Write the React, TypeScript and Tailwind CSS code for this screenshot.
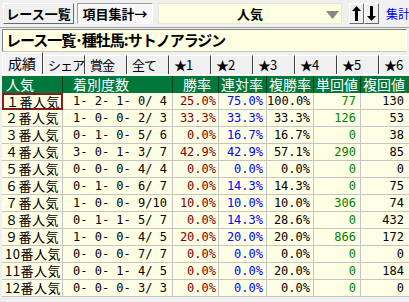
import React from "react";

const jp = "font-['MS_Gothic','Noto_Sans_CJK_JP',sans-serif]";
const mono = "font-['DejaVu_Sans_Mono',monospace]";

type Row = {
  label: string;
  record: string;
  win: string;
  place: string;
  show: string;
  tan: string;
  fuku: string;
};

const rows: Row[] = [
  { label: "１番人気", record: "1- 2- 1- 0/ 4", win: "25.0%", place: "75.0%", show: "100.0%", tan: "77", fuku: "130" },
  { label: "２番人気", record: "1- 0- 0- 2/ 3", win: "33.3%", place: "33.3%", show: "33.3%", tan: "126", fuku: "53" },
  { label: "３番人気", record: "0- 1- 0- 5/ 6", win: "0.0%", place: "16.7%", show: "16.7%", tan: "0", fuku: "38" },
  { label: "４番人気", record: "3- 0- 1- 3/ 7", win: "42.9%", place: "42.9%", show: "57.1%", tan: "290", fuku: "85" },
  { label: "５番人気", record: "0- 0- 0- 4/ 4", win: "0.0%", place: "0.0%", show: "0.0%", tan: "0", fuku: "0" },
  { label: "６番人気", record: "0- 1- 0- 6/ 7", win: "0.0%", place: "14.3%", show: "14.3%", tan: "0", fuku: "75" },
  { label: "７番人気", record: "1- 0- 0- 9/10", win: "10.0%", place: "10.0%", show: "10.0%", tan: "306", fuku: "74" },
  { label: "８番人気", record: "0- 1- 1- 5/ 7", win: "0.0%", place: "14.3%", show: "28.6%", tan: "0", fuku: "432" },
  { label: "９番人気", record: "1- 0- 0- 4/ 5", win: "20.0%", place: "20.0%", show: "20.0%", tan: "866", fuku: "172" },
  { label: "10番人気", record: "0- 0- 0- 7/ 7", win: "0.0%", place: "0.0%", show: "0.0%", tan: "0", fuku: "0" },
  { label: "11番人気", record: "0- 0- 1- 4/ 5", win: "0.0%", place: "0.0%", show: "20.0%", tan: "0", fuku: "184" },
  { label: "12番人気", record: "0- 0- 0- 3/ 3", win: "0.0%", place: "0.0%", show: "0.0%", tan: "0", fuku: "0" },
];

const tabs = ["シェア", "賞金", "全て", "★1", "★2", "★3", "★4", "★5", "★6"];

const cols = "grid grid-cols-[61px_110px_46px_48px_47px_47px_46px]";

function Arrow({ up }: { up?: boolean }) {
  return (
    <svg width="9" height="15" viewBox="0 0 9 15">
      {up ? (
        <>
          <polygon points="4.5,0 9,5 0,5" fill="#000" />
          <rect x="3" y="4" width="3" height="11" fill="#000" />
        </>
      ) : (
        <>
          <rect x="3" y="0" width="3" height="11" fill="#000" />
          <polygon points="4.5,15 9,10 0,10" fill="#000" />
        </>
      )}
    </svg>
  );
}

export default function App() {
  return (
    <div className={`w-[409px] h-[302px] overflow-hidden bg-[#f0f0f0] whitespace-nowrap ${jp}`}>
      {/* toolbar */}
      <div className="flex items-stretch h-[24px] pt-[3px] pl-[3px]">
        <div className="w-[71px] shrink-0 flex items-center justify-center bg-[#f0f0f0] border border-t-white border-l-white border-r-[#696969] border-b-[#696969] text-[13px] font-bold text-black">
          レース一覧
        </div>
        <div className="ml-[3px] w-[76px] shrink-0 flex items-center justify-center bg-[#f8f8f8] border border-t-[#a0a0a0] border-l-[#a0a0a0] border-r-white border-b-white text-[13px] font-bold text-black">
          項目集計→
        </div>
        <div className="ml-[5px] w-[184px] shrink-0 relative flex items-center justify-center bg-[#ffffe1] border border-[#e8e8d8] text-[13px] font-bold text-black">
          人気
          <svg className="absolute right-[2px] top-[7px]" width="13" height="8" viewBox="0 0 13 8">
            <polygon points="0,0 13,0 6.5,8" fill="#888" />
          </svg>
        </div>
        <div className="ml-[7px] w-[15px] shrink-0 flex items-center justify-center bg-[#f0f0f0] border border-t-white border-l-white border-r-[#696969] border-b-[#696969]">
          <Arrow up />
        </div>
        <div className="w-[15px] shrink-0 flex items-center justify-center bg-[#f0f0f0] border border-t-white border-l-white border-r-[#696969] border-b-[#696969]">
          <Arrow />
        </div>
        <div className="ml-[7px] shrink-0 flex items-center text-[12px] text-[#0000ff]">集計</div>
      </div>

      <div className="mt-[3px] h-[1px] bg-[#a0a0a0]" />

      {/* title */}
      <div className="mx-[2px] mt-[1px] h-[23px] flex items-center pl-[3px] bg-[#ffffe1] border border-t-[#808080] border-l-[#808080] border-r-white border-b-[#c8c8c8] text-[15px] font-bold text-black tracking-[-1px]">
        レース一覧･種牡馬:サトノアラジン
      </div>

      {/* tabs */}
      <div className="flex items-end h-[23px] pl-[2px] border-b border-white overflow-hidden">
        <div className="w-[41px] shrink-0 h-[22px] flex items-center pl-[5px] bg-[#f4f4f4] border-t border-l border-white border-r border-r-[#404040] text-[14px] text-black">
          成績
        </div>
        {tabs.map((t) => (
          <div
            key={t}
            className="w-[42px] shrink-0 h-[19px] flex items-center pl-[4px] bg-[#f0f0f0] border-t border-l border-white border-r border-r-[#404040] text-[13px] tracking-[-1px] text-black"
          >
            {t}
          </div>
        ))}
      </div>

      {/* table */}
      <div className="ml-[2px] mt-[1px]">
        <div className={`${cols} h-[17px] bg-[#00783c] text-white text-[14px] leading-[17px]`}>
          <div className="pl-[4px] border-r border-[#003a1c]">人気</div>
          <div className="pl-[10px] border-r border-[#003a1c]">着別度数</div>
          <div className="pl-[10px] border-r border-[#003a1c]">勝率</div>
          <div className="pl-[2px] border-r border-[#003a1c]">連対率</div>
          <div className="pl-[2px] border-r border-[#003a1c]">複勝率</div>
          <div className="pl-[2px] border-r border-[#003a1c]">単回値</div>
          <div className="pl-[2px]">複回値</div>
        </div>
        {rows.map((r, i) => (
          <div key={r.label} className={`${cols} h-[17px] bg-[#ffffe6] border-b border-[#c4c4c4] text-[13px] leading-[16px]`}>
            <div
              className={`text-[13px] tracking-[0.5px] text-black ${
                i === 0 ? "border-2 border-[#8a1c1c] pl-[2px] leading-[13px]" : "pl-[3px] border-r border-[#c4c4c4]"
              }`}
            >
              {r.label}
            </div>
            <div className={`pl-[10px] ${mono} text-[12px] whitespace-pre text-black border-r border-[#c4c4c4]`}>{r.record}</div>
            <div className={`pr-[2px] text-right ${mono} text-[12px] text-[#800000] border-r border-[#c4c4c4]`}>{r.win}</div>
            <div className={`pr-[3px] text-right ${mono} text-[12px] text-[#0000ff] border-r border-[#c4c4c4]`}>{r.place}</div>
            <div className={`pr-[3px] text-right ${mono} text-[12px] text-black border-r border-[#c4c4c4]`}>{r.show}</div>
            <div className={`pr-[4px] text-right ${mono} text-[12px] text-[#008000] border-r border-[#c4c4c4]`}>{r.tan}</div>
            <div className={`pr-[3px] text-right ${mono} text-[12px] text-black`}>{r.fuku}</div>
          </div>
        ))}
      </div>
    </div>
  );
}
